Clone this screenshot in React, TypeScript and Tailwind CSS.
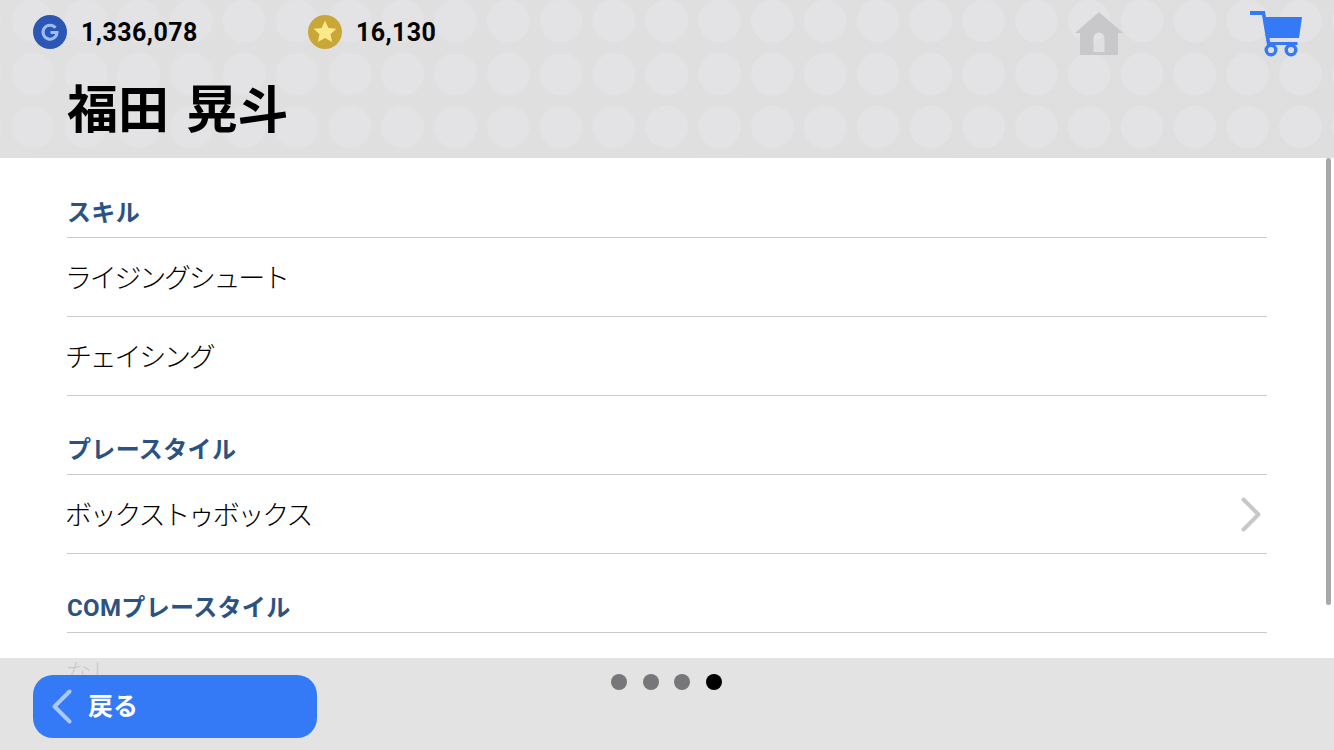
const jp = "font-['Noto_Sans_CJK_JP',sans-serif]";
const num = "font-['Roboto','Noto_Sans_CJK_JP',sans-serif]";

const Chevron = ({ dir, className }: { dir: 'left' | 'right'; className: string }) => (
  <svg viewBox="0 0 20 35" className={`w-[20px] h-[35px] ${className}`}>
    <polyline
      points={dir === 'right' ? '2.500,2.500 17.500,17.500 2.500,32.500' : '17.500,2.500 2.500,17.500 17.500,32.500'}
      fill="none"
      stroke="currentColor"
      strokeWidth="4"
      strokeLinecap="round"
      strokeLinejoin="round"
    />
  </svg>
);

const Section = ({ title, items }: { title: string; items: { label: string; more?: boolean; last?: boolean }[] }) => (
  <section>
    <div className="h-[79px] flex items-end border-b-[1.5px] border-[#cacaca] pb-[9px]">
      <h2 className={`${num} text-[24px] leading-[30px] font-bold tracking-[0.35px] text-[#2c5282]`}>{title}</h2>
    </div>
    {items.map((item) => (
      <div
        key={item.label}
        className={`h-[79px] flex items-center justify-between ${item.last ? '' : 'border-b-[1.5px] border-[#cacaca]'}`}
      >
        <span className={`${jp} -ml-[2px] text-[27px] leading-[36px] font-light tracking-[-2.25px] text-black`}>
          {item.label}
        </span>
        {item.more && <Chevron dir="right" className="mr-[6px] text-[#c8c8c8]" />}
      </div>
    ))}
  </section>
);

const GoldCoin = () => (
  <svg viewBox="0 0 34 34" className="w-[34px] h-[34px]">
    <circle cx="17" cy="17" r="17" fill="#c9a736" />
    <path d="M17 5.500l3.400 7.400 8 .9-5.900 5.400 1.600 7.900-7.100-4-7.100 4 1.600-7.900-5.900-5.400 8-.9z" fill="#fbe98a" />
  </svg>
);

const GCoin = () => (
  <svg viewBox="0 0 34 34" className="w-[34px] h-[34px]">
    <circle cx="17" cy="17" r="17" fill="#2c56b4" />
    <path d="M22.500 12.800A7 7 0 1 0 24 17.600h-6.500" fill="none" stroke="#9bbcf8" strokeWidth="3" />
  </svg>
);

const HomeIcon = () => (
  <svg viewBox="0 0 48 44" className="w-[48px] h-[44px]">
    <path
      fillRule="evenodd"
      d="M24 0L48 21h-5v20.500a1.500 1.500 0 0 1-1.500 1.500h-35A1.500 1.500 0 0 1 5 41.500V21H0zM18.500 40h11V26a5.500 5.500 0 0 0-11 0z"
      fill="#c8c8ca"
    />
  </svg>
);

const CartIcon = () => (
  <svg viewBox="0 0 52 46" className="w-[52px] h-[46px]">
    <path d="M0 0h15l1 6h36l-3 21H19.500l.6 4H47.500v3H17L12 4H0z" fill="#3479f6" />
    <circle cx="21" cy="39" r="4.800" fill="none" stroke="#3479f6" strokeWidth="3.400" />
    <circle cx="41" cy="39" r="4.800" fill="none" stroke="#3479f6" strokeWidth="3.400" />
  </svg>
);

export default function App() {
  return (
    <div className="relative w-[1334px] h-[750px] overflow-hidden bg-white flex flex-col">
      <header className="h-[158px] shrink-0 [background:radial-gradient(circle,#e3e3e5_21px,transparent_21.5px)_6.6px_-5.5px/52.82px_53px,linear-gradient(to_right,#e0e0e0,#dedede)]">
        <div className="h-[64px] pl-[33px] pr-[32px] flex items-center">
          <div className="w-[275px] flex items-center gap-[14px]">
            <GCoin />
            <span className={`${num} mt-[1px] text-[25px] font-bold tracking-[0.45px] text-black`}>1,336,078</span>
          </div>
          <div className="flex items-center gap-[14px]">
            <GoldCoin />
            <span className={`${num} mt-[1px] text-[25px] font-bold tracking-[0.4px] text-black`}>16,130</span>
          </div>
          <div className="ml-auto mt-[4px] flex items-center gap-[127px]">
            <HomeIcon />
            <CartIcon />
          </div>
        </div>
        <h1 className={`${jp} pl-[67px] pt-[10px] text-[51px] leading-[64px] font-bold [word-spacing:6px] text-black`}>
          福田 晃斗
        </h1>
      </header>

      <main className="flex-1 px-[67px] pt-[1px] overflow-hidden">
        <Section title="スキル" items={[{ label: 'ライジングシュート' }, { label: 'チェイシング' }]} />
        <Section title="プレースタイル" items={[{ label: 'ボックストゥボックス', more: true }]} />
        <Section title="COMプレースタイル" items={[{ label: 'なし', last: true }]} />
      </main>

      <div className="absolute right-[3px] top-[158px] w-[5px] h-[447px] rounded-full bg-[#a8a8a8]" />

      <footer className="absolute left-0 right-0 bottom-0 h-[92px] bg-[#e0e0e0]/90">
        <div className="absolute left-[611px] top-[16px] flex gap-[15.5px]">
          <span className="w-4 h-4 rounded-full bg-[#77777b]" />
          <span className="w-4 h-4 rounded-full bg-[#77777b]" />
          <span className="w-4 h-4 rounded-full bg-[#77777b]" />
          <span className="w-4 h-4 rounded-full bg-black" />
        </div>
        <button className="absolute left-[33px] top-[17px] w-[284px] h-[63px] rounded-[20px] bg-[#3479f6] flex items-center">
          <Chevron dir="left" className="ml-[19px] text-[#a9c8fb]" />
          <span className={`${jp} ml-[16px] -mt-[4px] text-[25px] font-bold text-white`}>戻る</span>
        </button>
      </footer>
    </div>
  );
}
